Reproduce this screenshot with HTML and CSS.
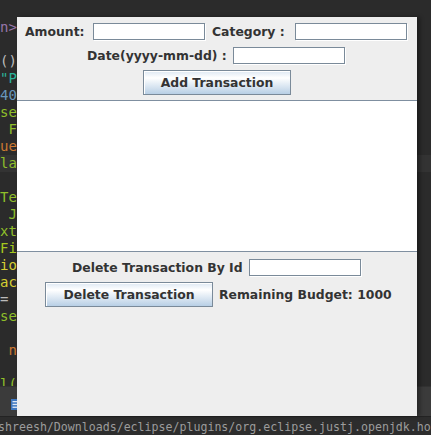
FILE: index.html
```html
<!DOCTYPE html>
<html>
<head>
<meta charset="utf-8">
<link rel="stylesheet" href="styles.css">
</head>
<body>
<div class="desktop">
  <div class="editor">
    <div class="code">
      <div class="ln c-purple">n&gt;</div>
      <div class="ln"></div>
      <div class="ln c-grey">()</div>
      <div class="ln c-teal">"P</div>
      <div class="ln c-blue">40</div>
      <div class="ln c-green">se</div>
      <div class="ln c-green">&nbsp;F</div>
      <div class="ln c-orange">ue</div>
      <div class="ln c-green cur">la</div>
      <div class="ln"></div>
      <div class="ln c-green">Te</div>
      <div class="ln c-green">&nbsp;J</div>
      <div class="ln c-green">xt</div>
      <div class="ln c-lime">Fi</div>
      <div class="ln c-yellow">io</div>
      <div class="ln c-yellow">ac</div>
      <div class="ln c-grey">=</div>
      <div class="ln c-green">se</div>
      <div class="ln"></div>
      <div class="ln c-orange">&nbsp;n</div>
      <div class="ln"></div>
      <div class="ln c-green">l(</div>
    </div>
    <div class="console">
      <svg class="console-icon" width="8" height="11" viewBox="0 0 8 11"><rect x="0" y="0" width="8" height="11" fill="#3f78c0"/><rect x="1.5" y="2" width="5" height="1.3" fill="#dfe8f5"/><rect x="1.5" y="4.8" width="5" height="1.3" fill="#dfe8f5"/><rect x="1.5" y="7.6" width="5" height="1.3" fill="#dfe8f5"/></svg>
    </div>
    <div class="status">shreesh/Downloads/eclipse/plugins/org.eclipse.justj.openjdk.hotspot</div>
  </div>

  <div class="window">
    <div class="top-panel">
      <div class="row row1">
        <span class="lbl w-amount">Amount:</span>
        <span class="field"></span>
        <span class="lbl w-cat">Category :</span>
        <span class="field"></span>
      </div>
      <div class="row row2">
        <span class="lbl w-date">Date(yyyy-mm-dd) :</span>
        <span class="field"></span>
      </div>
      <div class="row row3">
        <span class="btn btn-add">Add Transaction</span>
      </div>
    </div>
    <div class="list-area"></div>
    <div class="bottom-panel">
      <div class="row row4">
        <span class="lbl w-del">Delete Transaction By Id</span>
        <span class="field"></span>
      </div>
      <div class="row row5">
        <span class="btn btn-del">Delete Transaction</span>
        <span class="lbl budget">Remaining Budget: 1000</span>
      </div>
    </div>
  </div>
</div>
</body>
</html>
```

FILE: styles.css
```css
html, body {
  margin: 0;
  padding: 0;
  background: #2b2b2b;
}
.desktop {
  position: relative;
  width: 431px;
  height: 435px;
  overflow: hidden;
}
.editor {
  display: flex;
  flex-direction: column;
  width: 431px;
  height: 435px;
}
.code {
  height: 368px;
  padding-top: 19px;
  overflow: hidden;
  background: #2b2b2b;
  font-family: "DejaVu Sans Mono", monospace;
  font-size: 14px;
}
.ln {
  height: 17px;
  line-height: 17px;
  white-space: pre;
}
.cur { background: #333333; }
.c-purple { color: #9876aa; }
.c-grey { color: #bbbbbb; }
.c-teal { color: #2bb39b; }
.c-blue { color: #6897bb; }
.c-green { color: #8fbf2a; }
.c-lime { color: #a5c81e; }
.c-orange { color: #cc7832; }
.c-yellow { color: #d6cf32; }
.console {
  height: 29px;
  background: #3b3b3b;
  border-top: 1px solid #323232;
  position: relative;
}
.console-icon {
  position: absolute;
  left: 11px;
  top: 12px;
}
.status {
  height: 18px;
  background: #2d2d2d;
  border-top: 1px solid #232323;
  color: #9c9c9c;
  font-family: "DejaVu Sans Mono", monospace;
  font-size: 11.6px;
  line-height: 21px;
  white-space: nowrap;
  overflow: hidden;
  text-indent: -2px;
}
.window {
  position: absolute;
  left: 17px;
  top: 17px;
  width: 400px;
  height: 399px;
  background: #eeeeee;
  display: flex;
  flex-direction: column;
  box-shadow: 3px 0 4px rgba(0, 0, 0, 0.35);
  font-family: "DejaVu Sans", sans-serif;
  font-size: 12.4px;
  font-weight: bold;
  color: #333333;
}
.top-panel {
  height: 83px;
  display: flex;
  flex-direction: column;
}
.row {
  display: flex;
  align-items: center;
  white-space: nowrap;
}
.row1 { margin-top: 5px; height: 18px; padding-left: 8px; }
.row2 { margin-top: 6px; height: 18px; padding-left: 70px; }
.row3 { margin-top: 6px; height: 25px; padding-left: 126px; }
.lbl {
  display: inline-block;
  line-height: 15px;
}
.w-amount { width: 68px; }
.w-cat { width: 83px; margin-left: 6px; }
.w-date { width: 146px; }
.w-del { width: 177px; }
.budget { margin-left: 6px; }
.field {
  display: inline-block;
  box-sizing: border-box;
  width: 112px;
  height: 17px;
  background: #ffffff;
  border: 1px solid #7a8a99;
  box-shadow: 1px 1px 0 #ffffff;
  margin-right: 1px;
}
.btn {
  display: flex;
  align-items: center;
  justify-content: center;
  box-sizing: border-box;
  height: 25px;
  border: 1px solid #7a8a99;
  background: linear-gradient(to bottom, #dde8f3 0%, #ffffff 30%, #b8cfe5 100%);
  box-shadow: inset 1px 1px 0 #ffffff;
  color: #333333;
  padding-bottom: 1px;
}
.btn-add { width: 148px; }
.btn-del { width: 168px; }
.list-area {
  height: 150px;
  background: #ffffff;
  border-top: 1px solid #7f8fa0;
  border-bottom: 1px solid #7f8fa0;
}
.bottom-panel {
  display: flex;
  flex-direction: column;
}
.row4 { margin-top: 6px; height: 18px; padding-left: 55px; }
.row5 { margin-top: 6px; height: 25px; padding-left: 28px; }
```
